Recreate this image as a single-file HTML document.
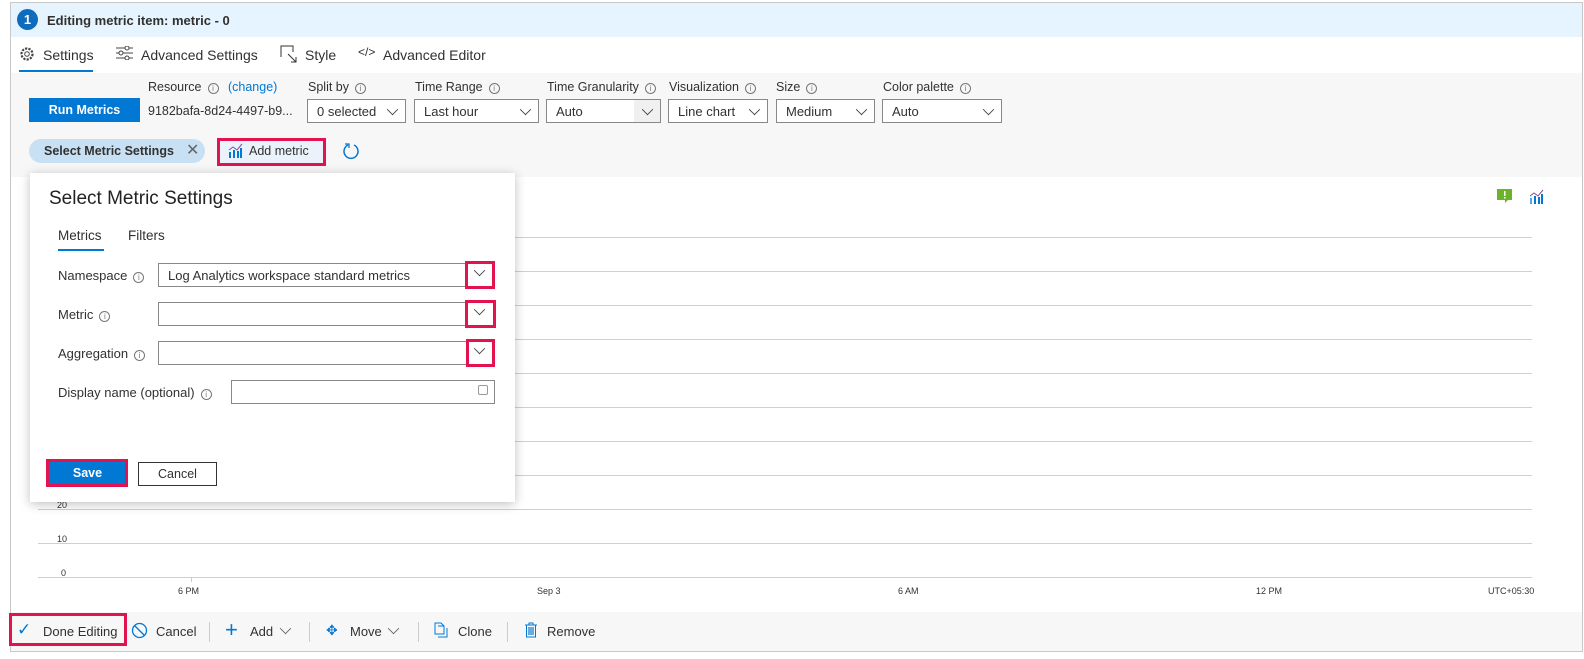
<!DOCTYPE html>
<html><head><meta charset="utf-8"><style>
*{box-sizing:border-box;margin:0;padding:0}
body{width:1584px;height:659px;background:#fff;font-family:"Liberation Sans",sans-serif;color:#323130;position:relative;overflow:hidden;font-size:13px}
.a{position:absolute}
.frame{left:10px;top:2px;width:1573px;height:650px;border:1px solid #c8c8c8}
.sel{position:absolute;height:24px;border:1px solid #8a8886;background:#fff;font-size:13px;padding:4px 0 0 9px}
.chev{position:absolute;right:8px;top:5px;width:9px;height:9px;border-right:1px solid #444;border-bottom:1px solid #444;transform:rotate(45deg) scale(.9);transform-origin:center}
.lbl{position:absolute;font-size:12.5px;top:80px}
.info{display:inline-block;width:11px;height:11px;border:1px solid #777;border-radius:50%;font-size:8px;line-height:9px;text-align:center;color:#777;margin-left:6px;vertical-align:0}
.grid{position:absolute;left:38px;width:1494px;height:1px;background:#d0d0d0}
.xl{position:absolute;top:586px;font-size:9px;color:#333}
.red{position:absolute;border:3px solid #e3134f}
.tb{position:absolute;top:624px;font-size:13px}
.sep{position:absolute;top:622px;width:1px;height:20px;background:#ccc}
</style></head><body>
<div class="a frame"></div>
<div class="a" style="left:11px;top:3px;width:1571px;height:34px;background:#e5f4fe"></div>
<div class="a" style="left:17px;top:9px;width:21px;height:21px;border-radius:50%;background:#0f6cbd;color:#fff;font-weight:bold;font-size:13px;text-align:center;line-height:21px">1</div>
<div class="a" style="left:47px;top:13px;font-weight:bold;font-size:13px">Editing metric item: metric - 0</div>
<svg class="a" style="left:19px;top:46px" width="16" height="16"><circle cx="8" cy="8" r="5.5" stroke="#444" fill="none" stroke-dasharray="2.2 1.2" stroke-width="2.2"/><circle cx="8" cy="8" r="2.3" stroke="#444" fill="none"/></svg>
<div class="a" style="left:43px;top:47px;font-size:14px">Settings</div>
<div class="a" style="left:19px;top:70px;width:74px;height:2px;background:#0078d4"></div>
<svg class="a" style="left:116px;top:46px" width="17" height="14"><g stroke="#444" fill="none"><line x1="0" y1="2" x2="17" y2="2"/><line x1="0" y1="7" x2="17" y2="7"/><line x1="0" y1="12" x2="17" y2="12"/><circle cx="11" cy="2" r="2" fill="#fff"/><circle cx="5" cy="7" r="2" fill="#fff"/><circle cx="11" cy="12" r="2" fill="#fff"/></g></svg>
<div class="a" style="left:141px;top:47px;font-size:14px">Advanced Settings</div>
<svg class="a" style="left:280px;top:45px" width="18" height="18"><g stroke="#333" fill="none"><path d="M1 12V1h12v6"/><path d="M8 9l8 8M11 17h5v-5"/></g></svg>
<div class="a" style="left:305px;top:47px;font-size:14px">Style</div>
<div class="a" style="left:358px;top:45px;font-size:12px">&lt;/&gt;</div>
<div class="a" style="left:383px;top:47px;font-size:14px">Advanced Editor</div>
<div class="a" style="left:11px;top:73px;width:1571px;height:104px;background:#f7f7f7"></div>
<div class="a" style="left:29px;top:98px;width:111px;height:24px;background:#0078d4;color:#fff;font-weight:bold;font-size:12.5px;text-align:center;line-height:24px">Run Metrics</div>
<div class="lbl" style="left:148px">Resource<span class="info">i</span> <span style="color:#0078d4;margin-left:6px">(change)</span></div>
<div class="a" style="left:148px;top:104px;font-size:12.5px">9182bafa-8d24-4497-b9...</div>
<div class="lbl" style="left:308px">Split by<span class="info">i</span></div>
<div class="sel" style="left:307px;top:99px;width:99px">0 selected<div class="chev"></div></div>
<div class="lbl" style="left:415px">Time Range<span class="info">i</span></div>
<div class="sel" style="left:414px;top:99px;width:125px">Last hour<div class="chev"></div></div>
<div class="lbl" style="left:547px">Time Granularity<span class="info">i</span></div>
<div class="sel" style="left:546px;top:99px;width:115px">Auto<div style="position:absolute;right:0;top:0;width:26px;height:22px;background:#f0f0f0"></div><div class="chev"></div></div>
<div class="lbl" style="left:669px">Visualization<span class="info">i</span></div>
<div class="sel" style="left:668px;top:99px;width:100px">Line chart<div class="chev"></div></div>
<div class="lbl" style="left:776px">Size<span class="info">i</span></div>
<div class="sel" style="left:776px;top:99px;width:99px">Medium<div class="chev"></div></div>
<div class="lbl" style="left:883px">Color palette<span class="info">i</span></div>
<div class="sel" style="left:882px;top:99px;width:120px">Auto<div class="chev"></div></div>
<div class="a" style="left:29px;top:139px;width:176px;height:24px;border-radius:12px;background:#c7e0f4"></div>
<div class="a" style="left:44px;top:144px;font-weight:bold;font-size:12.5px">Select Metric Settings</div>
<div class="a" style="left:186px;top:140px;font-size:16px;color:#666">✕</div>
<div class="a" style="left:217px;top:138px;width:109px;height:28px;background:#eaf3fb"></div>
<div class="red" style="left:217px;top:138px;width:109px;height:28px"></div>
<svg class="a" style="left:228px;top:143px" width="15" height="15"><g><rect x="1" y="9" width="2" height="6" fill="#0078d4"/><rect x="5" y="7" width="2" height="8" fill="#0078d4"/><rect x="9" y="8" width="2" height="7" fill="#0078d4"/><rect x="12" y="5" width="2" height="10" fill="#0078d4"/><path d="M1 7l4-3 4 3 5-6" stroke="#8a4ba0" fill="none"/></g></svg>
<div class="a" style="left:249px;top:144px;font-size:12.5px">Add metric</div>
<svg class="a" style="left:342px;top:142px" width="18" height="18"><path d="M6 3A7 7 0 1 0 12 3" stroke="#0078d4" stroke-width="1.5" fill="none"/><path d="M3 2h4v4" stroke="#0078d4" stroke-width="1.3" fill="none"/></svg>
<div class="grid" style="top:237px"></div><div class="grid" style="top:271px"></div><div class="grid" style="top:305px"></div><div class="grid" style="top:339px"></div><div class="grid" style="top:373px"></div><div class="grid" style="top:407px"></div><div class="grid" style="top:441px"></div><div class="grid" style="top:475px"></div><div class="grid" style="top:509px"></div><div class="grid" style="top:543px"></div><div class="grid" style="top:577px"></div>
<div class="a" style="left:57px;top:500px;font-size:9px">20</div>
<div class="a" style="left:57px;top:534px;font-size:9px">10</div>
<div class="a" style="left:61px;top:568px;font-size:9px">0</div>
<div class="xl" style="left:178px">6 PM</div><div class="xl" style="left:537px">Sep 3</div><div class="xl" style="left:898px">6 AM</div><div class="xl" style="left:1256px">12 PM</div><div class="xl" style="left:1488px">UTC+05:30</div>
<div class="a" style="left:191px;top:577px;width:1px;height:5px;background:#ccc"></div>
<svg class="a" style="left:1497px;top:189px" width="16" height="14"><rect x="0" y="0" width="15" height="11" fill="#6bb42a"/><rect x="7" y="2" width="1.5" height="5" fill="#fff"/><rect x="7" y="8" width="1.5" height="1.5" fill="#fff"/><path d="M8 11v3l3-3z" fill="#6bb42a"/></svg>
<svg class="a" style="left:1529px;top:189px" width="15" height="15"><rect x="1" y="9" width="2" height="6" fill="#58a7e8"/><rect x="5" y="7" width="2" height="8" fill="#0078d4"/><rect x="9" y="8" width="2" height="7" fill="#0078d4"/><rect x="12" y="5" width="2" height="10" fill="#0078d4"/><path d="M1 7l4-3 4 3 5-6" stroke="#8a4ba0" fill="none"/></svg>
<div class="a" style="left:30px;top:173px;width:485px;height:329px;background:#fff;box-shadow:0 2px 10px rgba(0,0,0,.25)"></div>
<div class="a" style="left:49px;top:188px;font-size:19px;color:#222">Select Metric Settings</div>
<div class="a" style="left:58px;top:228px;font-size:13.5px">Metrics</div>
<div class="a" style="left:58px;top:249px;width:46px;height:2px;background:#0078d4"></div>
<div class="a" style="left:128px;top:228px;font-size:13.5px">Filters</div>
<div class="a" style="left:58px;top:268px">Namespace<span class="info">i</span></div>
<div class="sel" style="left:158px;top:263px;width:337px;height:24px">Log Analytics workspace standard metrics</div>
<div class="a" style="left:58px;top:307px">Metric<span class="info">i</span></div>
<div class="sel" style="left:158px;top:302px;width:337px;height:24px"></div>
<div class="a" style="left:58px;top:346px">Aggregation<span class="info">i</span></div>
<div class="sel" style="left:158px;top:341px;width:337px;height:24px"></div>
<div class="a" style="left:58px;top:385px">Display name (optional)<span class="info">i</span></div>
<div class="sel" style="left:231px;top:380px;width:264px;height:24px"></div>
<div class="red" style="left:465px;top:261px;width:30px;height:28px"></div><div class="chev" style="left:475px;top:266px;right:auto"></div>
<div class="red" style="left:465px;top:300px;width:31px;height:28px"></div><div class="chev" style="left:475px;top:305px;right:auto"></div>
<div class="red" style="left:466px;top:339px;width:29px;height:28px"></div><div class="chev" style="left:475px;top:344px;right:auto"></div>
<div class="a" style="left:478px;top:385px;width:10px;height:10px;border:1px solid #999;border-radius:2px"></div>
<div class="a" style="left:48px;top:461px;width:79px;height:25px;background:#0078d4;color:#fff;font-weight:bold;font-size:12.5px;text-align:center;line-height:25px">Save</div>
<div class="red" style="left:46px;top:459px;width:82px;height:28px"></div>
<div class="a" style="left:138px;top:462px;width:79px;height:24px;border:1px solid #333;text-align:center;line-height:22px;font-size:12.5px">Cancel</div>
<div class="a" style="left:11px;top:612px;width:1571px;height:39px;background:#f7f7f7"></div>
<div class="red" style="left:9px;top:613px;width:118px;height:33px"></div>
<div class="a" style="left:17px;top:620px;font-size:17px;color:#0078d4">✓</div>
<div class="tb" style="left:43px">Done Editing</div>
<svg class="a" style="left:131px;top:622px" width="17" height="17"><circle cx="8.5" cy="8.5" r="7" stroke="#0078d4" stroke-width="1.3" fill="none"/><line x1="3.5" y1="3.5" x2="13.5" y2="13.5" stroke="#0078d4" stroke-width="1.3"/></svg>
<div class="tb" style="left:156px">Cancel</div>
<div class="sep" style="left:209px"></div>
<div class="a" style="left:225px;top:617px;font-size:22px;color:#0078d4;font-weight:300">+</div>
<div class="tb" style="left:250px">Add</div><div class="chev" style="left:281px;top:624px;right:auto;border-color:#666"></div>
<div class="sep" style="left:309px"></div>
<div class="a" style="left:326px;top:622px;font-size:14px;color:#0078d4">✥</div>
<div class="tb" style="left:350px">Move</div><div class="chev" style="left:389px;top:624px;right:auto;border-color:#666"></div>
<div class="sep" style="left:418px"></div>
<svg class="a" style="left:434px;top:622px" width="14" height="16"><path d="M1 1h6l3 3v8H1z M4 4h6 M4 15h9V6" stroke="#0078d4" fill="none"/></svg>
<div class="tb" style="left:458px">Clone</div>
<div class="sep" style="left:507px"></div>
<svg class="a" style="left:524px;top:622px" width="14" height="16"><path d="M1 3h12M5 3V1h4v2M2.5 3v12h9V3" stroke="#0078d4" fill="none"/><rect x="4" y="5" width="6" height="8" fill="#0078d4" opacity=".6"/></svg>
<div class="tb" style="left:547px">Remove</div>
</body></html>
